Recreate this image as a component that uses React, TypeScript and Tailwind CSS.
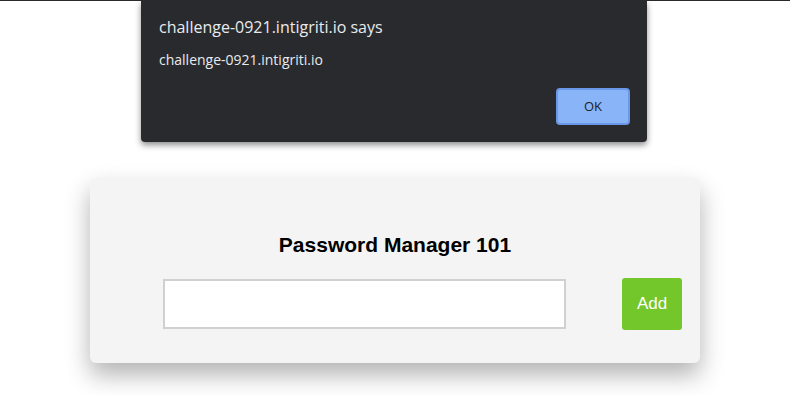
export default function App() {
  return (
    <main className="relative min-h-[395px] w-full overflow-hidden border-t border-[#2a2a2a] bg-white font-['Liberation_Sans',Arial,sans-serif]">
      {/* Password manager card */}
      <div className="flex justify-center pt-[177px]">
        <section className="flex h-[185px] w-[610px] flex-col items-center rounded-md bg-[#f4f4f4] shadow-[0_12px_24px_rgba(0,0,0,0.3)]">
          <h1 className="mt-[51px] text-[21px] font-bold leading-[32px] text-black">Password Manager 101</h1>
          <div className="mt-[17px] flex w-full items-center">
            <input
              type="text"
              className="ml-[73px] h-[50px] w-[403px] border-2 border-[#d0d0d0] bg-white outline-none"
            />
            <button
              type="button"
              className="ml-[56px] flex h-[52px] w-[60px] items-center justify-center rounded-[3px] bg-[#73c72b] text-[17px] text-white"
            >
              Add
            </button>
          </div>
        </section>
      </div>

      {/* Browser alert dialog */}
      <div
        role="alertdialog"
        className="absolute left-[141px] top-0 h-[141px] w-[506px] rounded-b-[4px] bg-[#292a2d] font-['Open_Sans','Noto_Sans',sans-serif] shadow-[0_3px_6px_rgba(0,0,0,0.45)]"
      >
        <p className="ml-[18px] mt-[15px] text-[16px] leading-[22px] text-[#e8eaed]">challenge-0921.intigriti.io says</p>
        <p className="ml-[18px] mt-[12px] text-[14px] leading-[20px] text-[#e8eaed]">challenge-0921.intigriti.io</p>
        <div className="mr-[17px] mt-[18px] flex justify-end">
          <button
            type="button"
            className="flex h-[37px] w-[74px] items-center justify-center rounded-[4px] border-2 border-[#6b97e8] bg-[#8ab4f8] text-[13px] text-[#202124]"
          >
            OK
          </button>
        </div>
      </div>
    </main>
  );
}
